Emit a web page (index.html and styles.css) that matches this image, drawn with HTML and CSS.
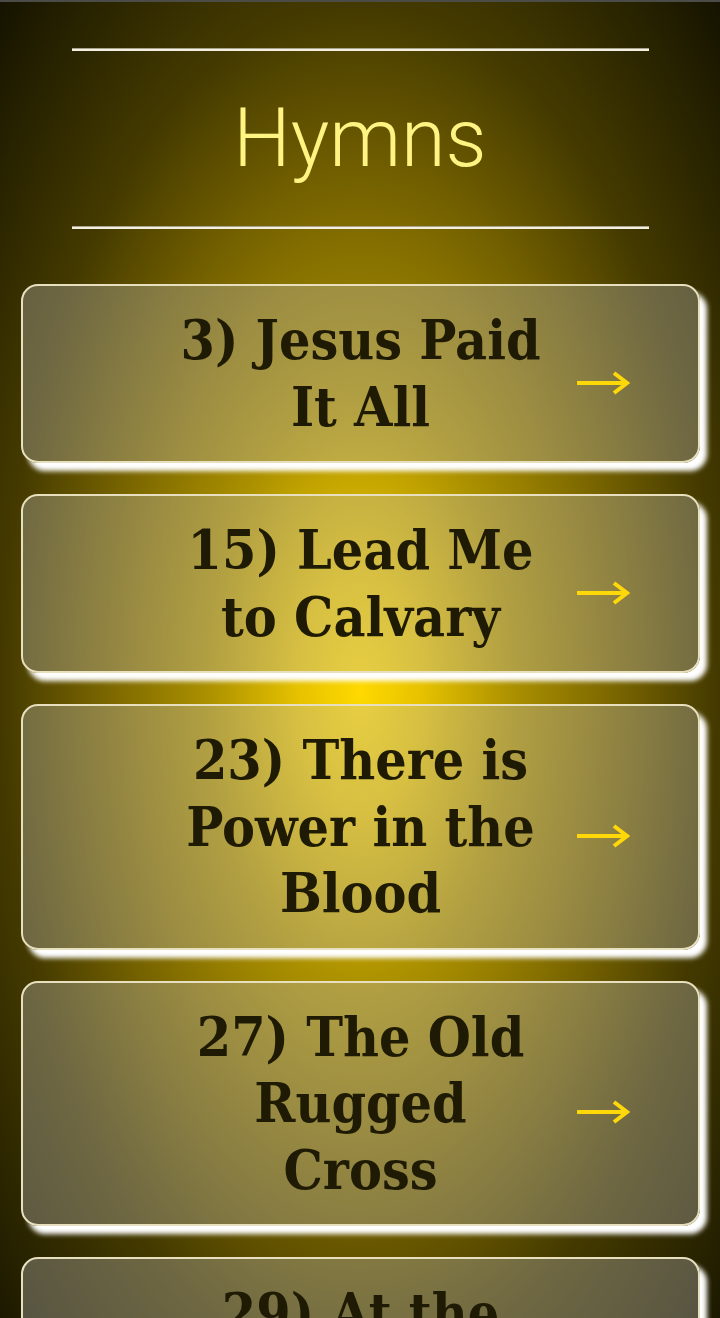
FILE: index.html
```html
<!DOCTYPE html>
<html lang="en">
<head>
<meta charset="utf-8">
<title>Hymns</title>
<link rel="stylesheet" href="styles.css">
</head>
<body>
<div class="topbar"></div>
<header class="header">
  <hr class="rule">
  <h1 class="title">Hymns</h1>
  <hr class="rule">
</header>
<main class="list">
  <a class="card" href="#">
    <span class="card-text">3) Jesus Paid It All</span>
    <svg class="arrow" viewBox="0 0 54 24" width="54" height="24"><path d="M1 12 H50" /><path d="M38 2 L51 12 L38 22" /></svg>
  </a>
  <a class="card" href="#">
    <span class="card-text">15) Lead Me to Calvary</span>
    <svg class="arrow" viewBox="0 0 54 24" width="54" height="24"><path d="M1 12 H50" /><path d="M38 2 L51 12 L38 22" /></svg>
  </a>
  <a class="card" href="#">
    <span class="card-text">23) There is Power in the Blood</span>
    <svg class="arrow" viewBox="0 0 54 24" width="54" height="24"><path d="M1 12 H50" /><path d="M38 2 L51 12 L38 22" /></svg>
  </a>
  <a class="card" href="#">
    <span class="card-text">27) The Old Rugged Cross</span>
    <svg class="arrow" viewBox="0 0 54 24" width="54" height="24"><path d="M1 12 H50" /><path d="M38 2 L51 12 L38 22" /></svg>
  </a>
  <a class="card" href="#">
    <span class="card-text">29) At the Cross</span>
    <svg class="arrow" viewBox="0 0 54 24" width="54" height="24"><path d="M1 12 H50" /><path d="M38 2 L51 12 L38 22" /></svg>
  </a>
</main>
</body>
</html>
```
FILE: styles.css
```css
html {
  background: radial-gradient(ellipse at 50% 52.5%, #ffd900 0%, #e6c200 12%, #ab9000 30%, #7a6600 50%, #443a00 70%, #151300 100%) fixed;
  background-color: #151300;
}
body {
  margin: 0;
  min-height: 1318px;
}
.topbar {
  height: 2px;
  background: #4b4b48;
}
.header {
  padding-top: 46px;
}
.rule {
  width: 577px;
  height: 0;
  margin: 0 auto;
  border: none;
  border-top: 1px solid #a9a38c;
  border-bottom: 2px solid #f3f0e2;
}
.title {
  margin: 40px 0;
  font-family: Roboto, "Liberation Sans", sans-serif;
  font-weight: 300;
  font-size: 81px;
  line-height: 95px;
  color: #fff382;
  text-align: center;
}
.list {
  padding-top: 55px;
}
.card {
  display: grid;
  grid-template-columns: 1fr 370px 1fr;
  align-items: center;
  margin: 0 20px 31px 21px;
  padding: 21px 0;
  border: 2px solid #e7dfbd;
  border-radius: 17px;
  background: rgba(190, 190, 190, 0.35);
  box-shadow: 7px 8px 5px #ffffff;
  text-decoration: none;
}
.card-text {
  grid-column: 2;
  font-family: "DejaVu Serif", "Liberation Serif", serif;
  font-stretch: condensed;
  font-weight: bold;
  font-size: 55px;
  line-height: 66.5px;
  color: #1f1a03;
  text-align: center;
}
.arrow {
  grid-column: 3;
  justify-self: start;
  margin-left: 30px;
  margin-top: 18px;
  fill: none;
  stroke: #ffd80a;
  stroke-width: 4;
  stroke-linecap: butt;
  stroke-linejoin: miter;
}
```
